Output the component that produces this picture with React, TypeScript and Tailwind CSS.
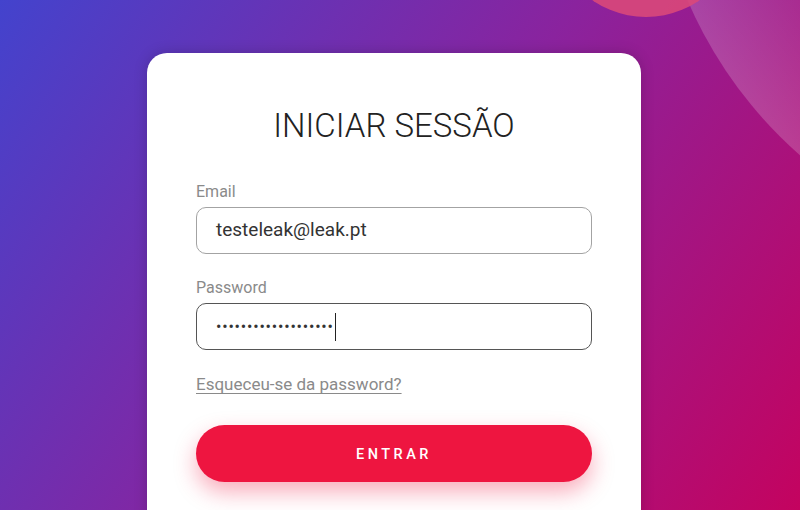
import React from "react"

const font = { fontFamily: "Roboto, 'Noto Sans', sans-serif" }

function Field({ label, children, focused }: { label: string; children: React.ReactNode; focused?: boolean }) {
  return (
    <div>
      <div className="text-[16px] leading-[20px] text-[#8a8a8a]">{label}</div>
      <div
        className={
          "mt-[5px] h-[47px] rounded-[10px] border bg-white flex items-center pl-[19px] " +
          (focused ? "border-[#555555]" : "border-[#a3a3a3]")
        }
      >
        {children}
      </div>
    </div>
  )
}

export default function App() {
  return (
    <div
      style={font}
      className="relative h-[510px] w-[800px] overflow-hidden bg-[linear-gradient(125deg,#4343cd_0%,#8a239e_50%,#c4035f_100%)]"
    >
      {/* decorative circles */}
      <div className="absolute left-[652px] top-[-608px] h-[872px] w-[872px] rounded-full bg-[linear-gradient(52deg,rgba(255,255,255,0)_0%,rgba(255,255,255,0.2)_14%,rgba(255,255,255,0.05)_26%,rgba(255,255,255,0)_40%)]" />
      <div className="absolute left-[552px] top-[-171px] h-[188px] w-[188px] rounded-full bg-[#d9487a] opacity-90" />

      <div className="relative flex justify-center pr-[12px] pt-[53px]">
        <div className="w-[494px] h-[480px] rounded-[20px] bg-white px-[49px] pt-[53px] shadow-[0_0_14px_rgba(0,0,0,0.18)]">
          <h1 className="text-center text-[33px] leading-[40px] font-light text-[#222222]">INICIAR SESSÃO</h1>

          <div className="mt-[36px] flex flex-col gap-[24px]">
            <Field label="Email">
              <span className="text-[19px] text-[#333333]">testeleak@leak.pt</span>
            </Field>
            <Field label="Password" focused>
              <span className="text-[16px] tracking-[0.8px] text-[#333333]">•••••••••••••••••••</span>
              <span className="ml-[1px] h-[28px] w-[1.5px] bg-[#222222]" />
            </Field>
          </div>

          <div className="mt-[24px] text-[17px] leading-[21px] text-[#8a8a8a] underline underline-offset-[3px]">
            Esqueceu-se da password?
          </div>

          <button className="mt-[30px] flex h-[57px] w-full items-center justify-center rounded-full bg-[#ee1540] pt-[3px] text-[14.5px] font-medium tracking-[3.5px] text-white shadow-[0_10px_22px_rgba(238,21,64,0.35)]">
            ENTRAR
          </button>
        </div>
      </div>
    </div>
  )
}
